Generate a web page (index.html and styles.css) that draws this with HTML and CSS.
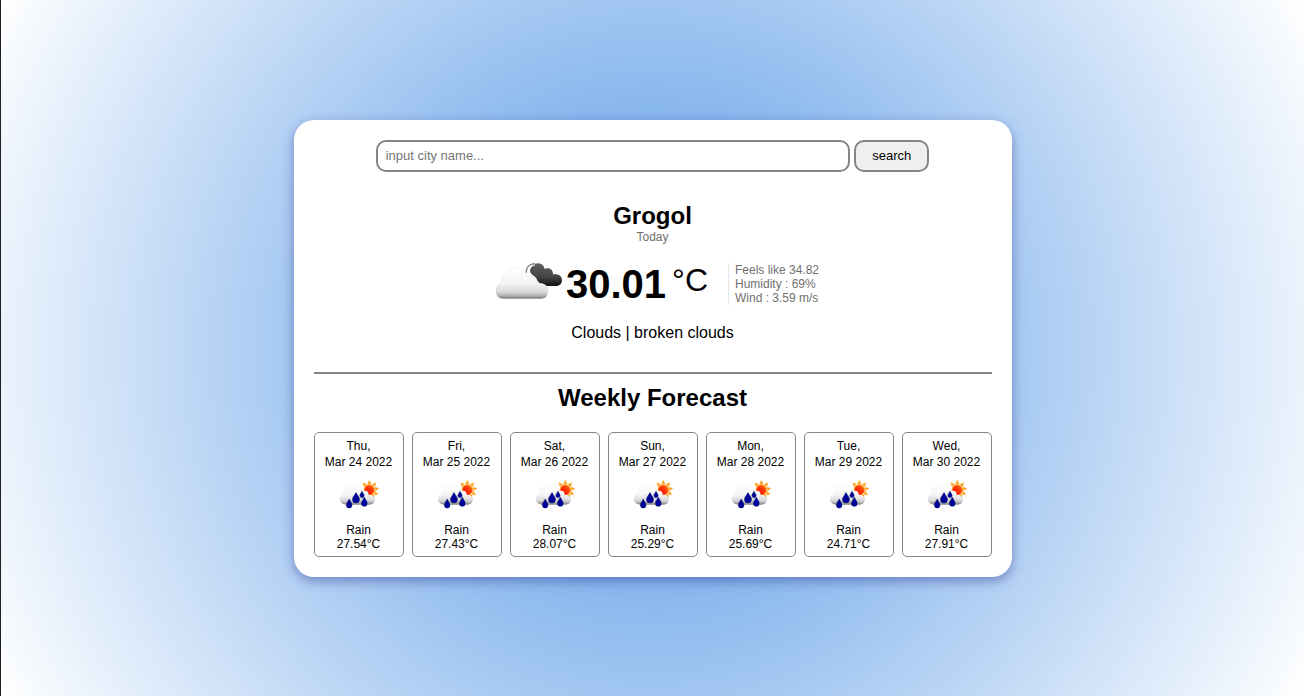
FILE: index.html
```html
<!DOCTYPE html>
<html lang="en">
<head>
<meta charset="utf-8">
<meta name="viewport" content="width=device-width, initial-scale=1">
<title>Weather</title>
<link rel="stylesheet" href="styles.css">
</head>
<body>
<svg class="defs" aria-hidden="true">
  <defs>
    <linearGradient id="cloud" x1="0" y1="0" x2="0" y2="1">
      <stop offset="0" stop-color="#fff"/>
      <stop offset=".5" stop-color="#f5f5f5"/>
      <stop offset=".8" stop-color="#d8d8d8"/>
      <stop offset=".93" stop-color="#a8a8a8"/>
      <stop offset="1" stop-color="#707070"/>
    </linearGradient>
    <linearGradient id="dark" x1="0" y1="0" x2="0" y2="1">
      <stop offset="0" stop-color="#606060"/>
      <stop offset=".6" stop-color="#444"/>
      <stop offset="1" stop-color="#111"/>
    </linearGradient>
    <linearGradient id="sun" x1="1" y1="0" x2="0" y2="1">
      <stop offset="0" stop-color="#ff8a1a"/>
      <stop offset=".4" stop-color="#ff3a08"/>
      <stop offset="1" stop-color="#f00"/>
    </linearGradient>
    <filter id="soft" x="-10%" y="-10%" width="120%" height="130%">
      <feDropShadow dx="0" dy="0" stdDeviation=".6" flood-color="#777" flood-opacity=".5"/>
    </filter>
    <symbol id="rain" viewBox="0 0 50 50">
      <g fill="#ffa01e">
        <path id="ray" d="M33.200 13L35.300 9L37.400 13z"/>
        <use href="#ray" transform="rotate(42 35.300 19)"/>
        <use href="#ray" transform="rotate(80 35.300 19)"/>
        <use href="#ray" transform="rotate(118 35.300 19)"/>
        <use href="#ray" transform="rotate(150 35.300 19)"/>
        <use href="#ray" transform="rotate(-42 35.300 19)"/>
      </g>
      <circle cx="35.300" cy="19" r="5.200" fill="url(#sun)" stroke="#ffa01e" stroke-width="1"/>
      <path filter="url(#soft)" fill="url(#cloud)" d="M12 33.500c-7 0-8-9-2-10.500-1-6 3-8 6-7 3-3.500 11.500-2.500 13 4 4-1 6 1.500 5.500 4 3.500-.5 6.500 1.500 6 5 0 3-2.500 4.500-5.500 4.500z"/>
      <g fill="#00009a" stroke="#001060" stroke-width=".5">
        <path d="M22 21.500c1.800 3.400 3.500 4.800 3.500 7a3.500 3.500 0 0 1-7 0c0-2.200 1.700-3.600 3.500-7z"/>
        <path d="M15.200 28c1.500 2.900 2.800 4.200 2.800 6.200a2.800 2.800 0 0 1-5.600 0c0-2 1.300-3.300 2.800-6.200z"/>
        <path d="M30.300 26.200c1.500 2.900 2.900 4.200 2.900 6.200a2.900 2.900 0 0 1-5.800 0c0-2 1.400-3.300 2.900-6.200z"/>
        <path d="M28 20.200c1.100 2.200 2.100 2.900 2.100 4.400a2.100 2.100 0 0 1-4.200 0c0-1.500 1-2.200 2.100-4.400z"/>
      </g>
    </symbol>
  </defs>
</svg>

<main class="card">
  <form class="search">
    <input class="search-input" type="text" placeholder="input city name..." aria-label="City name">
    <button class="search-button" type="button">search</button>
  </form>

  <section class="today">
    <h1 class="title">Grogol</h1>
    <p class="note">Today</p>
    <div class="current">
      <svg class="current-icon" viewBox="0 0 80 50" role="img" aria-label="Broken clouds">
        <path filter="url(#soft)" fill="url(#dark)" d="M44 13C44 7 48 4.500 52 4.500c3.500 0 6 2 6.500 5.500 4-2 8.500 0 8.500 5.500 5-1 9 1.500 9 5.500s-3 6-6.500 6H56z"/>
        <path fill="none" stroke="#888" stroke-width="1.500" d="M40 14c0-5 3-9 9-9.500"/>
        <path fill="none" stroke="#fff" stroke-width="1" d="M42 15c0-5 3-8 7-9"/>
        <path filter="url(#soft)" fill="url(#cloud)" d="M17 39.500c-4.500 0-7-3-7-7.500 0-4.500 2-7.500 6-9-2-4 0-9.500 5-9.500 4-7.500 17.500-7 20 3 6-2 11 2 10.500 8 5-1 10.500 1 10.500 7 0 5-2.500 8-6.500 8z"/>
      </svg>
      <strong class="temp">30.01</strong>
      <span class="unit">°C</span>
      <ul class="details">
        <li>Feels like 34.82</li>
        <li>Humidity : 69%</li>
        <li>Wind : 3.59 m/s</li>
      </ul>
    </div>
    <p class="summary">Clouds | broken clouds</p>
  </section>

  <section class="weekly">
    <h2 class="title">Weekly Forecast</h2>
    <ul class="days">
      <li class="day"><p class="date">Thu,<br>Mar 24 2022</p><svg class="day-icon" aria-hidden="true"><use href="#rain"/></svg><p>Rain</p><p>27.54°C</p></li>
      <li class="day"><p class="date">Fri,<br>Mar 25 2022</p><svg class="day-icon" aria-hidden="true"><use href="#rain"/></svg><p>Rain</p><p>27.43°C</p></li>
      <li class="day"><p class="date">Sat,<br>Mar 26 2022</p><svg class="day-icon" aria-hidden="true"><use href="#rain"/></svg><p>Rain</p><p>28.07°C</p></li>
      <li class="day"><p class="date">Sun,<br>Mar 27 2022</p><svg class="day-icon" aria-hidden="true"><use href="#rain"/></svg><p>Rain</p><p>25.29°C</p></li>
      <li class="day"><p class="date">Mon,<br>Mar 28 2022</p><svg class="day-icon" aria-hidden="true"><use href="#rain"/></svg><p>Rain</p><p>25.69°C</p></li>
      <li class="day"><p class="date">Tue,<br>Mar 29 2022</p><svg class="day-icon" aria-hidden="true"><use href="#rain"/></svg><p>Rain</p><p>24.71°C</p></li>
      <li class="day"><p class="date">Wed,<br>Mar 30 2022</p><svg class="day-icon" aria-hidden="true"><use href="#rain"/></svg><p>Rain</p><p>27.91°C</p></li>
    </ul>
  </section>
</main>
</body>
</html>
```

FILE: styles.css
```css
* {
  box-sizing: border-box;
  margin: 0;
  padding: 0;
}

body {
  display: flex;
  align-items: center;
  justify-content: center;
  min-height: 100vh;
  border-left: 1px solid #202124;
  background: radial-gradient(circle, #4f94e5 0%, #fff 100%);
  color: #000;
  font-family: Arial, "Liberation Sans", sans-serif;
  text-align: center;
}

ul {
  list-style: none;
}

.defs {
  position: absolute;
  width: 0;
  height: 0;
}

.card {
  width: 55%;
  min-width: 718px;
  padding: 20px;
  border-radius: 20px;
  background: #fff;
  box-shadow: 0 4px 12px rgba(50, 60, 150, 0.5);
}

.search {
  display: flex;
  justify-content: center;
  gap: 4px;
}

.search-input,
.search-button {
  height: 32px;
  border: 2px solid #858585;
  border-radius: 10px;
  font-family: inherit;
  font-size: 13px;
}

.search-input {
  width: 70%;
  padding: 0 8px;
  background: #fff;
}

.search-input::placeholder {
  color: #757575;
}

.search-button {
  padding: 0 16px;
  background: #efefef;
  color: #000;
}

.today {
  padding: 30px 0;
  border-bottom: 2px solid #858585;
}

.title {
  font-size: 24px;
  line-height: 28px;
}

.note {
  color: #707070;
  font-size: 12px;
  line-height: 14px;
}

.current {
  display: flex;
  align-items: center;
  justify-content: center;
  margin: 15px 0;
}

.current-icon {
  width: 80px;
  height: 50px;
}

.temp {
  font-size: 40px;
  line-height: 50px;
}

.unit {
  margin: 0 20px 8px 6px;
  font-size: 32px;
  line-height: 36px;
}

.details {
  padding-left: 6px;
  border-left: 1px solid #e6e6e6;
  color: #707070;
  font-size: 12px;
  line-height: 14px;
  text-align: left;
}

.summary {
  font-size: 16px;
  line-height: 18px;
}

.weekly {
  padding-top: 10px;
}

.days {
  display: grid;
  grid-template-columns: repeat(7, 1fr);
  gap: 8px;
  margin-top: 20px;
}

.day {
  padding: 5px;
  border: 1px solid #858585;
  border-radius: 5px;
  font-size: 12px;
  line-height: 14px;
}

.date {
  line-height: 16px;
}

.day-icon {
  display: block;
  width: 50px;
  height: 50px;
  margin: 1px auto 2px;
}
```
